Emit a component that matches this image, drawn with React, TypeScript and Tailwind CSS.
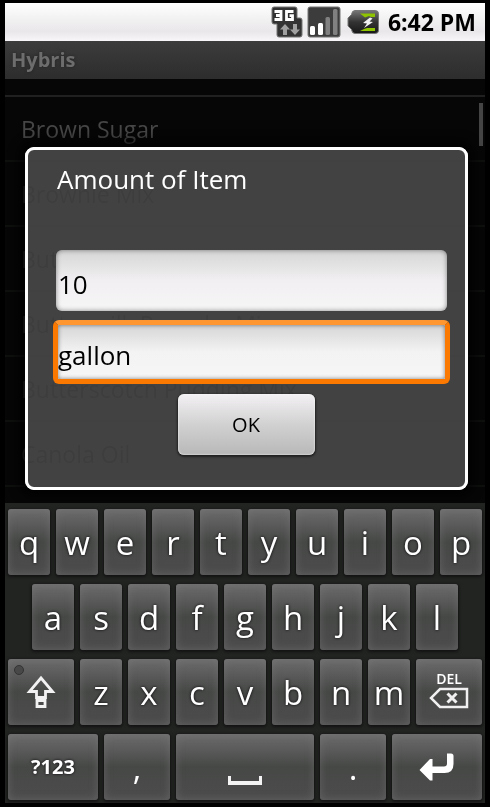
import React from "react";

const items = [
  "Brown Sugar",
  "Brownie Mix",
  "Butter",
  "Buttermilk Pancake Mix",
  "Butterscotch Pudding Mix",
  "Canola Oil",
];

const keyBase =
  "flex h-[66px] items-center justify-center rounded-[3px] bg-linear-to-b from-[#6c6c6c] via-[#464846] via-50% to-[#4c4c4c] text-white shadow-[inset_0_0_8px_rgba(125,125,125,0.5),0_1px_3px_1px_rgba(0,0,0,0.5)]";

function Letter({ char, first = false }: { char: string; first?: boolean }) {
  return (
    <button
      type="button"
      className={`${keyBase} col-span-2 text-[33px] leading-none [text-shadow:0_0_3px_#000] ${first ? "col-start-2" : ""}`}
    >
      {char}
    </button>
  );
}

function NetworkIcon() {
  return (
    <svg className="h-8 w-8" viewBox="0 0 32 32" aria-hidden="true">
      <path d="M3 1h21q2 0 2 2v9h3q2 0 2 2v15q0 2-2 2H8q-2 0-2-2V18H3q-2 0-2-2V3q0-2 2-2z" fill="#333" stroke="#777" />
      <path d="M3.500 5.500H10V13.500H3.500M5 9.500h5" fill="none" stroke="#fff" strokeWidth="2.800" />
      <path d="M22.500 5.500H15.500V13.500H21.500V9.700H18.500" fill="none" stroke="#fff" strokeWidth="2.800" />
      <path d="M14 18l5 5.500h-3V29h-4v-5.500H9z" fill="#a0a0a0" />
      <path d="M22 18h4v5.500h3L24 29l-5-5.500h3z" fill="#a0a0a0" />
    </svg>
  );
}

function SignalIcon() {
  return (
    <svg className="h-8 w-8.5" viewBox="0 0 34 32" aria-hidden="true">
      <rect x="1" y="1" width="32" height="30" rx="2" fill="#3c3c3c" stroke="#777" />
      <rect x="3" y="20" width="5" height="9" rx="1.500" fill="#fff" />
      <rect x="11" y="17" width="5" height="12" rx="1.500" fill="#fff" />
      <rect x="18.500" y="11" width="4.500" height="18" rx="1.500" fill="#808080" />
      <rect x="26" y="3" width="4.500" height="26" rx="1.500" fill="#808080" />
    </svg>
  );
}

function BatteryIcon() {
  return (
    <svg className="h-6 w-8" viewBox="0 0 32 24" aria-hidden="true">
      <defs>
        <linearGradient id="cell" x2="0" y2="1">
          <stop offset="0" stopColor="#777" />
          <stop offset=".5" stopColor="#333" />
          <stop offset="1" stopColor="#181818" />
        </linearGradient>
      </defs>
      <path d="M8 .5h20q3.500 0 3.500 3v17q0 3-3.500 3H8q-3 0-3.500-4L1 16V8l3.500-3.500Q5 .5 8 .5z" fill="url(#cell)" stroke="#777" />
      <path d="M13 3.500h15V7h-4l-2-1-4 1.500zM13 21h15v-3h-8l-3 1z" fill="#8fc400" />
      <path d="M23 7.500l-7 5.500 4 .5-3 4.500 9-6-3.500-.500 3-3z" fill="#f2f2f2" />
    </svg>
  );
}

function ShiftIcon() {
  return (
    <svg className="h-9 w-8" viewBox="0 0 32 36" fill="none" stroke="#f2f2f2" strokeWidth="2.800" aria-hidden="true">
      <path d="M16 4L4.500 17.500h7v6h9v-6h7z" />
      <path d="M12 26.500h8v6h-8z" />
    </svg>
  );
}

function DeleteIcon() {
  return (
    <svg className="h-5.5 w-10" viewBox="0 0 40 22" fill="none" stroke="#f0f0f0" strokeWidth="2.500" aria-hidden="true">
      <path d="M11 2h27v18H11L2 11z" />
      <path d="M18.500 6.500l9 9M27.500 6.500l-9 9" strokeWidth="3" />
    </svg>
  );
}

function SpaceIcon() {
  return (
    <svg className="h-3 w-9" viewBox="0 0 36 12" fill="none" stroke="#f4f4f4" aria-hidden="true">
      <path d="M2.500 1v9M33.500 1v9" strokeWidth="3" />
      <path d="M1 8h34" strokeWidth="4" />
    </svg>
  );
}

function EnterIcon() {
  return (
    <svg className="h-7 w-9" viewBox="0 0 36 28" aria-hidden="true">
      <path d="M28 0.500h4q2.500 0 2.500 2.500V11q0 9-9 9H13.500v7.500H11L.5 17 11 6h2.500v7.500H25q3 0 3-3z" fill="#fff" />
    </svg>
  );
}

export default function App() {
  return (
    <div className="bg-black px-[5px] pt-[3px] pb-1 font-['Open_Sans','Noto_Sans',sans-serif]">
      <header className="flex h-[38px] items-center justify-end bg-linear-to-b from-white via-[#e9e7e9] via-75% to-[#f8f6f8] pr-[9px]">
        <NetworkIcon />
        <span className="ml-1 flex">
          <SignalIcon />
        </span>
        <span className="ml-1.5 flex">
          <BatteryIcon />
        </span>
        <span className="ml-[9px] text-[23px] font-bold text-black">6:42 PM</span>
      </header>
      <h1 className="flex h-[38px] items-center bg-linear-to-b from-[#3b3c3b] to-[#2d2d2d] px-1.5 text-xl font-bold text-[#6d6d6d] [text-shadow:0_0_3px_#222]">
        Hybris
      </h1>

      <main className="grid h-[424px] overflow-hidden">
        <div className="col-start-1 row-start-1 flex items-start bg-[#060606] pt-4">
          <ul className="min-w-0 flex-1">
            {items.map((item, i) => (
              <li
                key={item}
                className={`flex h-[65px] items-center border-t-2 px-4 pt-0.5 text-[23px] ${i === 0 ? "border-[#202020] text-[#454645]" : "border-[#0e100e] text-[#2a2b2a]"}`}
              >
                {item}
              </li>
            ))}
            <li className="border-t-2 border-[#0e100e]" />
          </ul>
          <div className="mt-2 -ml-1.5 mr-0.5 h-[43px] w-1 bg-[#444]" />
        </div>

        <section
          role="dialog"
          aria-labelledby="dialog-title"
          className="z-10 col-start-1 row-start-1 mt-[68px] mr-[17px] mb-[13px] ml-5 flex flex-col rounded-[9px] border-3 border-white bg-[#222222]/85 pr-[15px] pl-[25px] shadow-[0_0_8px_8px_rgba(0,2,0,0.6)] backdrop-invert"
        >
          <h2 id="dialog-title" className="mt-2.5 h-[90px] px-1 text-[26px] text-white">
            Amount of Item
          </h2>
          <div className="px-[3px]">
            <input
              aria-label="Amount"
              defaultValue="10"
              className="h-[61px] w-full rounded-md bg-linear-to-b from-[#d6d6d6] via-[#f1eff1] via-50% to-[#f7f6f7] px-0.5 pt-1.5 text-[26px] text-black shadow-[inset_0_0_5px_rgba(0,0,0,0.45)] outline-none"
            />
          </div>
          <input
            aria-label="Unit"
            defaultValue="gallon"
            className="mt-[9px] h-16 w-full rounded-md border-[5px] border-[#fb7900] border-t-[#ff962f] bg-linear-to-b from-[#d6d6d6] via-[#f4f3f4] via-50% to-[#f7f6f7] pt-1.5 text-[26px] text-black shadow-[inset_0_0_4px_rgba(0,0,0,0.5)] outline-none"
          />
          <button
            type="button"
            className="mt-[10px] mr-[11px] h-[61px] w-[137px] self-center rounded-md bg-linear-to-b from-[#f3f1f3] via-[#d2d1d2] via-50% to-[#b9b8b9] text-xl text-black shadow-[inset_0_0_2px_#fff,0_1px_2px_1px_rgba(20,20,20,0.7)]"
          >
            OK
          </button>
        </section>
      </main>

      <div className="grid grid-cols-20 gap-x-1.5 gap-y-[9px] bg-[#222422] px-[3px] pt-1.5 pb-[3px]">
        {"qwertyuiop".split("").map((c) => (
          <Letter key={c} char={c} />
        ))}
        {"asdfghjkl".split("").map((c, i) => (
          <Letter key={c} char={c} first={i === 0} />
        ))}
        <button type="button" aria-label="Shift" className={`${keyBase} relative col-span-3 col-start-1`}>
          <span className="absolute top-1.5 left-1.5 size-2.5 rounded-full border border-[#333] bg-[#484848]" />
          <ShiftIcon />
        </button>
        {"zxcvbnm".split("").map((c) => (
          <Letter key={c} char={c} />
        ))}
        <button type="button" className={`${keyBase} col-span-3 flex-col pb-1 text-sm leading-4 font-semibold`}>
          <span>DEL</span>
          <DeleteIcon />
        </button>
        <button type="button" className={`${keyBase} col-span-4 text-xl font-bold [text-shadow:0_0_3px_#000]`}>
          ?123
        </button>
        <button type="button" className={`${keyBase} col-span-3 text-[33px] leading-none`}>
          ,
        </button>
        <button type="button" aria-label="Space" className={`${keyBase} col-span-6 pt-7`}>
          <SpaceIcon />
        </button>
        <button type="button" className={`${keyBase} col-span-3 text-[33px] leading-none`}>
          .
        </button>
        <button type="button" aria-label="Enter" className={`${keyBase} col-span-4`}>
          <EnterIcon />
        </button>
      </div>
    </div>
  );
}
